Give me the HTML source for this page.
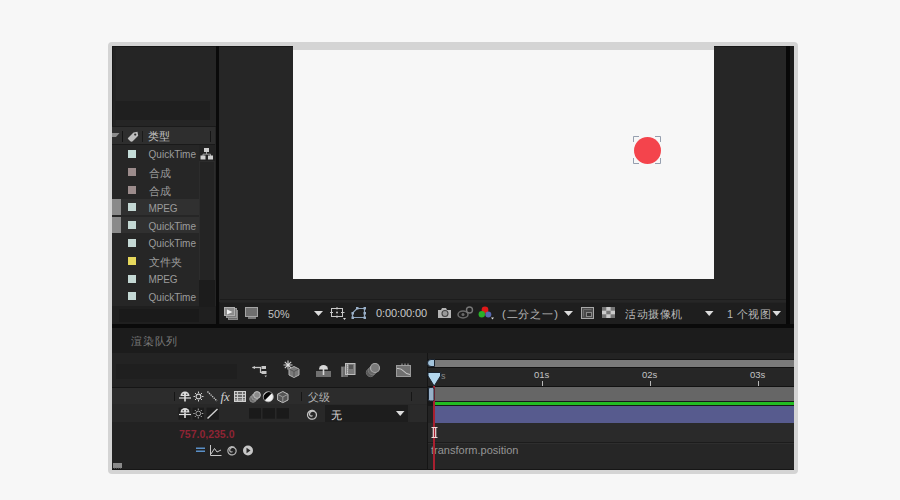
<!DOCTYPE html>
<html><head><meta charset="utf-8">
<style>
html,body{margin:0;padding:0;}
body{width:900px;height:500px;background:#f7f7f7;position:relative;overflow:hidden;font-family:"Liberation Sans",sans-serif;}
.a{position:absolute;}
.t{position:absolute;white-space:nowrap;font-size:11px;line-height:12px;color:#a8a8a8;}
</style></head><body>
<!-- frame -->
<div class="a" style="left:108px;top:42px;width:690px;height:432px;background:#d4d4d4;border-radius:4px;"></div>
<div class="a" style="left:112px;top:46px;width:682px;height:424px;background:#1a1a1a;"></div>

<!-- LEFT PROJECT PANEL -->
<div class="a" style="left:112px;top:46px;width:104px;height:278px;background:#252525;"></div>
<div class="a" style="left:112px;top:46px;width:104px;height:1px;background:#161616;"></div>
<div class="a" style="left:112px;top:46px;width:1px;height:80px;background:#181818;"></div>
<div class="a" style="left:113px;top:47px;width:3px;height:79px;background:#222;"></div>
<div class="a" style="left:115px;top:101px;width:95px;height:19px;background:#1f1f1f;"></div>
<div class="a" style="left:112px;top:126px;width:104px;height:1px;background:#1a1a1a;"></div>
<div class="a" style="left:112px;top:127px;width:103px;height:17px;background:#2e2e2e;"></div>
<div class="a" style="left:112px;top:144px;width:103px;height:1px;background:#1a1a1a;"></div>
<div class="a" style="left:112px;top:145px;width:87px;height:161px;background:#262626;"></div>
<div class="a" style="left:199px;top:145px;width:16px;height:161px;background:#232323;"></div>
<div class="a" style="left:112px;top:306px;width:104px;height:18px;background:#1f1f1f;"></div>

<!-- header content -->
<svg class="a" style="left:112px;top:131px;" width="100" height="13" viewBox="0 0 100 13">
  <path d="M0 2 L7.5 2 L4 6 L0 6 Z" fill="#8c8c8c"/>
  <rect x="10" y="0" width="1" height="11" fill="#151515"/>
  <path d="M16.5 6.5 L21.5 1.5 L25.5 0.8 L26.2 4.8 L21.2 9.8 Q19.5 11.5 17.8 9.8 L16.5 8.5 Q15 7 16.5 6.5 Z" fill="#bdbdbd"/>
  <circle cx="23.2" cy="3.6" r="1.1" fill="#2e2e2e"/>
  <rect x="30" y="0" width="1" height="11" fill="#1a1a1a"/>
  <rect x="98" y="0" width="1" height="11" fill="#151515"/>
</svg>
<div class="t" style="left:148px;top:130px;font-size:11px;color:#c4c4c4;">类型</div>
<!-- scrollbar column -->
<div class="a" style="left:199px;top:161px;width:14px;height:118px;background:#242424;border:1px solid #2c2c2c;border-bottom:none;"></div>
<div class="a" style="left:199px;top:280px;width:16px;height:27px;background:#1c1c1c;"></div>
<svg class="a" style="left:200px;top:147px;" width="14" height="13" viewBox="0 0 14 13">
  <rect x="4" y="1" width="5" height="4" fill="#cfcfcf"/>
  <path d="M6.5 5 V7 M3 9 V7.2 H10.5 V9" stroke="#a0a0a0" stroke-width="1" fill="none"/>
  <rect x="0.5" y="8.5" width="5" height="4" fill="#d0d0d0"/>
  <rect x="8" y="8.5" width="5" height="4" fill="#d0d0d0"/>
</svg>
<!-- footer -->
<div class="a" style="left:119px;top:309px;width:80px;height:13px;background:#1a1a1a;"></div>

<!-- LIST ROWS -->
<div class="a" style="left:128px;top:150.0px;width:8px;height:8px;background:#c4dcd8;"></div>
<div class="t" style="left:148.6px;top:149.3px;font-size:10px;color:#9c9c9c;">QuickTime</div>
<div class="a" style="left:128px;top:167.8px;width:8px;height:8px;background:#9c8c8c;"></div>
<div class="t" style="left:148.6px;top:166.8px;font-size:11px;color:#9c9c9c;">合成</div>
<div class="a" style="left:128px;top:185.6px;width:8px;height:8px;background:#9c8c8c;"></div>
<div class="t" style="left:148.6px;top:184.6px;font-size:11px;color:#9c9c9c;">合成</div>
<div class="a" style="left:121px;top:198.9px;width:78px;height:16px;background:#303030;"></div>
<div class="a" style="left:112px;top:198.9px;width:9px;height:16px;background:#8a8a8a;"></div>
<div class="a" style="left:128px;top:203.4px;width:8px;height:8px;background:#c4d8d4;"></div>
<div class="t" style="left:148.6px;top:202.7px;font-size:10px;color:#9c9c9c;letter-spacing:-0.2px;">MPEG</div>
<div class="a" style="left:121px;top:216.7px;width:78px;height:16px;background:#303030;"></div>
<div class="a" style="left:112px;top:216.7px;width:9px;height:16px;background:#8a8a8a;"></div>
<div class="a" style="left:128px;top:221.2px;width:8px;height:8px;background:#c4d8d4;"></div>
<div class="t" style="left:148.6px;top:220.5px;font-size:10px;color:#9c9c9c;">QuickTime</div>
<div class="a" style="left:128px;top:239.0px;width:8px;height:8px;background:#c4d8d4;"></div>
<div class="t" style="left:148.6px;top:238.3px;font-size:10px;color:#9c9c9c;">QuickTime</div>
<div class="a" style="left:128px;top:256.8px;width:8px;height:8px;background:#e6d85c;"></div>
<div class="t" style="left:148.6px;top:255.8px;font-size:11px;color:#9c9c9c;">文件夹</div>
<div class="a" style="left:128px;top:274.6px;width:8px;height:8px;background:#c4d8d4;"></div>
<div class="t" style="left:148.6px;top:273.9px;font-size:10px;color:#9c9c9c;letter-spacing:-0.2px;">MPEG</div>
<div class="a" style="left:128px;top:292.4px;width:8px;height:8px;background:#c4d8d4;"></div>
<div class="t" style="left:148.6px;top:291.7px;font-size:10px;color:#9c9c9c;">QuickTime</div>

<!-- BLACK DIVIDER -->
<div class="a" style="left:216px;top:46px;width:3px;height:278px;background:#0a0a0a;"></div>

<!-- VIEWER -->
<div class="a" style="left:219px;top:46px;width:567px;height:256px;background:#262626;"></div>
<div class="a" style="left:219px;top:46px;width:567px;height:1px;background:#181818;"></div>
<div class="a" style="left:293px;top:46px;width:421px;height:4px;background:#d4d4d4;"></div>
<div class="a" style="left:293px;top:50px;width:421px;height:229px;background:#f7f7f7;"></div>
<div class="a" style="left:634px;top:137px;width:27px;height:27px;border-radius:50%;background:#f4444c;"></div>
<svg class="a" style="left:630px;top:133px;" width="35" height="35" viewBox="630 133 35 35">
  <path d="M633.5 142 V136.5 H639 M655 136.5 H660.5 V142 M660.5 158 V163.5 H655 M639 163.5 H633.5 V158" fill="none" stroke="#8a94a6" stroke-width="0.9"/>
</svg>
<!-- toolbar -->
<div class="a" style="left:220px;top:299px;width:566px;height:1px;background:#1c1c1c;"></div>
<div class="a" style="left:220px;top:302px;width:566px;height:22px;background:#1e1e1e;"></div>
<div class="a" style="left:220px;top:302px;width:566px;height:1px;background:#232323;"></div>
<svg class="a" style="left:220px;top:302px;" width="566" height="22" viewBox="220 302 566 22">
  <!-- preview stack -->
  <rect x="228.5" y="310.5" width="9" height="9" fill="#6c6c6c" stroke="#8a8a8a"/>
  <rect x="226.5" y="308.5" width="10" height="9" fill="#7a7a7a" stroke="#999"/>
  <rect x="224.5" y="307.5" width="10" height="8" fill="#8c8c8c" stroke="#b0b0b0"/>
  <path d="M227 309.5 L232.5 312 L227 314.5 Z" fill="#f0f0f0"/>
  <!-- monitor -->
  <rect x="245.5" y="307.5" width="12" height="9" fill="#6e6e6e" stroke="#a4a4a4"/>
  <rect x="248" y="317" width="8" height="2" fill="#7a7a7a"/>
  <!-- triangle -->
  <path d="M314 311 L323 311 L318.5 316 Z" fill="#dcdcdc"/>
  <!-- grid icon -->
  <rect x="331.5" y="308.5" width="11" height="8" fill="none" stroke="#c8c8c8"/>
  <path d="M330 312.5 H333 M341 312.5 H344.5 M337 307 V309.5 M337 315.5 V318" stroke="#c8c8c8"/>
  <circle cx="337" cy="312.5" r="1" fill="#c8c8c8"/>
  <path d="M343 318 L346 318 L344.5 320 Z" fill="#d8d8d8"/>
  <!-- mask icon -->
  <path d="M357 308.5 H364.5 V317.5 H352.5 V313 Z" fill="none" stroke="#8ea4bc" stroke-width="1.2"/>
  <rect x="356" y="307" width="2.5" height="2.5" fill="#9ab0c8"/>
  <rect x="363.5" y="307" width="2.5" height="2.5" fill="#9ab0c8"/>
  <rect x="363.5" y="316.5" width="2.5" height="2.5" fill="#9ab0c8"/>
  <rect x="351.5" y="316.5" width="2.5" height="2.5" fill="#9ab0c8"/>
  <rect x="351.5" y="312" width="2.5" height="2.5" fill="#9ab0c8"/>
  <rect x="363.5" y="312" width="2.5" height="2.5" fill="#9ab0c8"/>
  <!-- camera -->
  <path d="M438 310 H441 L442 308 H446 L447 310 H451 V318 H438 Z" fill="#b4b4b4"/>
  <circle cx="445" cy="313.5" r="3" fill="#999" stroke="#444" stroke-width="1.1"/>
  <!-- eye 3d -->
  <ellipse cx="463" cy="314.5" rx="5" ry="3.5" fill="none" stroke="#6a6a6a" stroke-width="1.5"/>
  <circle cx="463" cy="314.5" r="1.5" fill="#6a6a6a"/>
  <circle cx="469.5" cy="310" r="3" fill="none" stroke="#777" stroke-width="1.4"/>
  <!-- rgb -->
  <circle cx="485" cy="310" r="3.4" fill="#e01818"/>
  <circle cx="481.8" cy="314.2" r="3.2" fill="#28b028"/>
  <circle cx="488.3" cy="314.5" r="3" fill="#5868b0"/>
  <path d="M491 317.5 L494 317.5 L492.5 319.5 Z" fill="#e0e0e0"/>
  <!-- triangle 2 -->
  <path d="M564 311 L573 311 L568.5 316 Z" fill="#dcdcdc"/>
  <!-- region icon -->
  <rect x="581.5" y="307.5" width="12" height="11" fill="#4a4a4a" stroke="#a8a8a8"/>
  <path d="M583.5 316.5 V309.5 H591.5" fill="none" stroke="#6a6a6a"/>
  <rect x="586.5" y="312.5" width="5" height="4" fill="#333" stroke="#8a8a8a"/>
  <!-- checker -->
  <rect x="602" y="307" width="13" height="11" fill="#cacaca"/>
  <rect x="602" y="307" width="4.3" height="3.7" fill="#777"/>
  <rect x="610.6" y="307" width="4.4" height="3.7" fill="#777"/>
  <rect x="606.3" y="310.7" width="4.3" height="3.6" fill="#777"/>
  <rect x="602" y="314.3" width="4.3" height="3.7" fill="#777"/>
  <rect x="610.6" y="314.3" width="4.4" height="3.7" fill="#777"/>
  <!-- triangles 3,4 -->
  <path d="M705 311 L713.5 311 L709.2 316 Z" fill="#dcdcdc"/>
  <path d="M772.5 311 L781 311 L776.7 316 Z" fill="#dcdcdc"/>
</svg>
<div class="t" style="left:268px;top:307.5px;font-size:10.8px;color:#c4c4c4;">50%</div>
<div class="t" style="left:376px;top:307px;font-size:11px;color:#c8c8c8;letter-spacing:-0.1px;">0:00:00:00</div>
<div class="t" style="left:502px;top:308px;font-size:11px;color:#b8b8b8;letter-spacing:0.9px;">(二分之一)</div>
<div class="t" style="left:625px;top:308px;font-size:11px;color:#b8b8b8;letter-spacing:0.5px;">活动摄像机</div>
<div class="t" style="left:727px;top:308px;font-size:11px;color:#b8b8b8;letter-spacing:0.35px;">1 个视图</div>
<div class="a" style="left:786px;top:46px;width:4px;height:278px;background:#080808;"></div>
<div class="a" style="left:790px;top:46px;width:4px;height:278px;background:#1c1c1c;"></div>

<!-- black horizontal bar -->
<div class="a" style="left:112px;top:324px;width:682px;height:4px;background:#0a0a0a;"></div>
<!-- tab bar -->
<div class="a" style="left:112px;top:328px;width:682px;height:25px;background:#1c1c1c;"></div>


<!-- TIMELINE LEFT -->
<div class="a" style="left:112px;top:353px;width:315px;height:34px;background:#232323;"></div>
<div class="a" style="left:116px;top:364px;width:121px;height:15px;background:#1f1f1f;"></div>
<div class="a" style="left:112px;top:387px;width:315px;height:1px;background:#151515;"></div>
<div class="a" style="left:112px;top:388px;width:315px;height:16px;background:#2c2c2c;"></div>
<div class="a" style="left:112px;top:404px;width:315px;height:18px;background:#282828;"></div>
<div class="a" style="left:112px;top:422px;width:315px;height:20px;background:#222222;"></div>
<div class="a" style="left:112px;top:442px;width:315px;height:28px;background:#222222;"></div>

<!-- timeline left icons -->
<svg class="a" style="left:112px;top:353px;" width="315" height="117" viewBox="112 353 315 117">
  <!-- flowchart -->
  <path d="M252.5 367.5 H261" stroke="#c8c8c8" stroke-width="1.3"/>
  <path d="M252 367.5 L255 366 V369 Z" fill="#c8c8c8"/>
  <rect x="261.5" y="366" width="4.5" height="3" fill="#c8c8c8"/>
  <path d="M260.5 367.5 V372.5 H262" stroke="#c8c8c8" stroke-width="1.2" fill="none"/>
  <rect x="261.5" y="371" width="5" height="3" fill="#c8c8c8"/>
  <path d="M264.5 375.5 H267 L265.7 377.2 Z" fill="#bbb"/>
  <!-- sparkle cube -->
  <path d="M288 360.5 V369.5 M283.5 365 H292.5 M284.8 361.8 L291.2 368.2 M291.2 361.8 L284.8 368.2" stroke="#d4d4d4" stroke-width="1.1"/><circle cx="288" cy="365" r="1.1" fill="#e0e0e0"/>
  <path d="M294 366.5 L299 369 V375 L294 377.5 L289 375 V369 Z" fill="#7a7a7a" stroke="#b4b4b4" stroke-width="1"/>
  <path d="M289.5 369.2 L294 371.5 L298.5 369.2 M294 371.5 V377" stroke="#555" stroke-width="1" fill="none"/>
  <!-- shy dome -->
  <path d="M319 369.5 A4.5 4.5 0 0 1 328 369.5 Z" fill="#d8d8d8"/>
  <rect x="316" y="371" width="15" height="6" fill="#707070"/>
  <path d="M323.5 369 V375" stroke="#d8d8d8" stroke-width="1.6"/>
  <!-- frame blend -->
  <rect x="341" y="366.5" width="7" height="10.5" fill="#6a6a6a"/>
  <path d="M342.3 367.5 V376.5" stroke="#aaa" stroke-width="1" stroke-dasharray="1 1"/>
  <rect x="345.5" y="363.5" width="9.5" height="11" fill="#7a7a7a" stroke="#bdbdbd" stroke-width="1"/>
  <path d="M347.5 364.5 V374" stroke="#e0e0e0" stroke-width="1.2" stroke-dasharray="1.2 0.8"/>
  <rect x="349" y="365" width="4" height="4" fill="#555"/>
  <!-- motion blur -->
  <circle cx="370.5" cy="372.5" r="4.2" fill="#5a5a5a" stroke="#6a6a6a"/>
  <circle cx="372.5" cy="370.5" r="4.2" fill="#666" stroke="#7a7a7a"/>
  <circle cx="375" cy="368" r="4.5" fill="#7a7a7a" stroke="#a8a8a8" stroke-width="1.2"/>
  <!-- graph editor -->
  <rect x="396.5" y="365.5" width="14" height="11" fill="#707070" stroke="#9a9a9a"/>
  <path d="M402 363.5 V365.5 M405 363.5 V365.5 M408 363.5 V365.5" stroke="#aaa"/>
  <path d="M397 368.5 Q401 368 403.5 371 T410 374.5" stroke="#c8c8c8" stroke-width="1.1" fill="none"/>

  <!-- header separators -->
  <rect x="174" y="392" width="1" height="9" fill="#161616"/>
  <rect x="301" y="392" width="1" height="9" fill="#161616"/>
  <rect x="411" y="392" width="1" height="9" fill="#161616"/>
  <!-- shy header -->
  <path d="M180.5 396 A4.5 4.5 0 0 1 189.5 396 Z" fill="#dcdcdc"/><circle cx="183.3" cy="394.2" r="0.8" fill="#444"/><circle cx="186.7" cy="394.2" r="0.8" fill="#444"/>
  <path d="M179 398 H191" stroke="#dcdcdc" stroke-width="1.2"/>
  <path d="M185 396 V401.5" stroke="#dcdcdc" stroke-width="1.6"/>
  <!-- sun -->
  <circle cx="198.5" cy="396.5" r="2.4" fill="none" stroke="#d0d0d0" stroke-width="1.1"/>
  <path d="M198.5 391.5 V393 M198.5 400 V401.5 M193.5 396.5 H195 M202 396.5 H203.5 M195 393 L196 394 M201 399 L202 400 M202 393 L201 394 M196 399 L195 400" stroke="#d0d0d0" stroke-width="1"/>
  <!-- dotted backslash -->
  <path d="M207.5 391.5 L217 401" stroke="#d0d0d0" stroke-width="1.3" stroke-dasharray="1.3 0.9"/>
  <!-- film -->
  <rect x="234.5" y="391.5" width="11" height="10" fill="#6a6a6a" stroke="#d0d0d0"/>
  <path d="M234.5 394.5 H245.5 M234.5 397.5 H245.5 M234.5 400 H245.5 M237.5 391.5 V401.5 M242.5 391.5 V401.5" stroke="#d0d0d0" stroke-width="0.9"/>
  <!-- motion blur small -->
  <circle cx="253" cy="399" r="3.3" fill="#6a6a6a" stroke="#8a8a8a"/>
  <circle cx="255" cy="397" r="3.3" fill="#777" stroke="#999"/>
  <circle cx="257" cy="395" r="3.4" fill="#8a8a8a" stroke="#c0c0c0"/>
  <!-- adjustment -->
  <circle cx="268.3" cy="396.8" r="5" fill="#f0f0f0" stroke="#b8b8b8" stroke-width="0.8"/>
  <path d="M264.8 400.3 A5 5 0 0 1 271.8 393.3 Z" fill="#050505"/>
  <!-- cube -->
  <path d="M282.8 391.5 L288 394.2 V400 L282.8 402.7 L277.6 400 V394.2 Z" fill="#555" stroke="#c0c0c0" stroke-width="1"/>
  <path d="M277.8 394.4 L282.8 397 L287.8 394.4 M282.8 397 V402.5" stroke="#9a9a9a" stroke-width="1" fill="none"/>

  <!-- row 2 cells -->
  <rect x="178.5" y="407.7" width="12" height="12" fill="#1c1c1c"/>
  <rect x="192.5" y="407.7" width="11.5" height="12" fill="#1c1c1c"/>
  <rect x="206.5" y="407.7" width="12.3" height="12" fill="#1c1c1c"/>
  <path d="M180.5 412.5 A4.5 4.5 0 0 1 189.5 412.5 Z" fill="#dcdcdc"/><circle cx="183.3" cy="410.7" r="0.8" fill="#444"/><circle cx="186.7" cy="410.7" r="0.8" fill="#444"/>
  <path d="M179 414.5 H191" stroke="#dcdcdc" stroke-width="1.2"/>
  <path d="M185 412.5 V418" stroke="#dcdcdc" stroke-width="1.6"/>
  <circle cx="198.3" cy="413.5" r="2.4" fill="none" stroke="#a8a8a8" stroke-width="1"/>
  <path d="M198.3 408.5 V410 M198.3 417 V418.5 M193.3 413.5 H194.8 M201.8 413.5 H203.3 M194.8 410 L195.8 411 M200.8 416 L201.8 417 M201.8 410 L200.8 411 M195.8 416 L194.8 417" stroke="#a8a8a8" stroke-width="1"/>
  <path d="M207.5 418.5 L217.5 409" stroke="#d0d0d0" stroke-width="1.4"/>
  <rect x="249" y="408.2" width="12" height="10.5" fill="#1a1a1a"/>
  <rect x="262.5" y="408.2" width="12.5" height="10.5" fill="#1a1a1a"/>
  <rect x="276.5" y="408.2" width="12.5" height="10.5" fill="#1a1a1a"/>
  <!-- spiral -->
  <path d="M312.32 415.31 L312.29 415.44 L312.23 415.58 L312.14 415.71 L312.02 415.82 L311.88 415.92 L311.70 416.00 L311.51 416.05 L311.30 416.06 L311.07 416.04 L310.84 415.98 L310.61 415.88 L310.39 415.74 L310.18 415.56 L309.99 415.33 L309.83 415.08 L309.71 414.78 L309.63 414.46 L309.59 414.12 L309.61 413.77 L309.68 413.40 L309.80 413.04 L309.98 412.69 L310.22 412.35 L310.51 412.04 L310.85 411.77 L311.24 411.54 L311.67 411.37 L312.14 411.25 L312.63 411.19 L313.13 411.21 L313.65 411.29 L314.15 411.46 L314.65 411.69 L315.12 412.00 L315.55 412.38 L315.93 412.83 L316.16 413.37 L316.31 413.94 L316.39 414.52 L316.39 415.11 L316.31 415.69 L316.15 416.25 L315.92 416.79 L315.62 417.30 L315.26 417.76 L314.83 418.17 L314.36 418.51 L313.85 418.79 L313.30 419.00 L312.73 419.14 L312.14 419.20 L311.56 419.18 L310.98 419.08 L310.42 418.90 L309.88 418.66 L309.39 418.34 L308.94 417.96 L308.55 417.53 L308.21 417.04 L307.95 416.52 L307.76 415.96 L307.64 415.39 L307.60 414.80 L307.64 414.22 L307.75 413.64 L307.95 413.09 L308.21 412.56 L308.54 412.08 L308.94 411.64 L309.38 411.26 L309.88 410.95 L310.41 410.70 L310.97 410.52 L311.55 410.42 L312.13 410.40 L312.72 410.46 L313.29 410.59 L313.84 410.80 L314.35 411.08 L314.83 411.43" stroke="#c4c4c4" stroke-width="1.3" fill="none"/>
  <!-- dropdown -->
  <rect x="325" y="405" width="83" height="17" fill="#1d1d1d"/>
  <path d="M396 411 L404.5 411 L400.2 416 Z" fill="#dcdcdc"/>
  <rect x="410" y="405" width="17" height="17" fill="#2a2a2a"/>

  <!-- row 4 icons -->
  <path d="M196 448.2 H205 M196 451.2 H205" stroke="#5a90c8" stroke-width="1.6"/>
  <path d="M210.5 445 V455.5 H221.5" stroke="#c8c8c8" stroke-width="1" fill="none"/>
  <path d="M211 454 L214.5 448.5 L217 452 L221 450" stroke="#c8c8c8" stroke-width="1" fill="none"/>
  <path d="M232.32 451.31 L232.29 451.44 L232.23 451.56 L232.14 451.68 L232.02 451.79 L231.88 451.88 L231.72 451.95 L231.53 451.99 L231.33 452.00 L231.12 451.98 L230.90 451.92 L230.68 451.82 L230.47 451.69 L230.28 451.51 L230.10 451.30 L229.96 451.06 L229.84 450.78 L229.77 450.48 L229.74 450.16 L229.75 449.83 L229.82 449.49 L229.94 449.15 L230.11 448.82 L230.33 448.51 L230.60 448.22 L230.93 447.97 L231.29 447.75 L231.69 447.59 L232.13 447.48 L232.58 447.43 L233.06 447.45 L233.54 447.53 L234.01 447.68 L234.47 447.90 L234.91 448.19 L235.31 448.55 L235.67 448.96 L235.88 449.47 L236.02 450.00 L236.09 450.54 L236.09 451.09 L236.02 451.63 L235.87 452.16 L235.65 452.66 L235.37 453.13 L235.03 453.56 L234.64 453.94 L234.20 454.26 L233.72 454.52 L233.21 454.72 L232.68 454.84 L232.13 454.90 L231.59 454.88 L231.05 454.79 L230.52 454.63 L230.03 454.39 L229.57 454.10 L229.15 453.75 L228.78 453.34 L228.47 452.89 L228.23 452.40 L228.05 451.89 L227.94 451.35 L227.90 450.80 L227.94 450.26 L228.04 449.72 L228.22 449.20 L228.47 448.72 L228.78 448.26 L229.14 447.86 L229.56 447.50 L230.02 447.21 L230.52 446.98 L231.04 446.81 L231.58 446.72 L232.13 446.70 L232.67 446.76 L233.20 446.88 L233.71 447.08 L234.19 447.34 L234.64 447.66" stroke="#b8b8b8" stroke-width="1.2" fill="none"/>
  <circle cx="248" cy="450.5" r="5" fill="#c8c8c8"/>
  <path d="M246.5 447.8 L250.5 450.5 L246.5 453.2 Z" fill="#2a2a2a"/>
  <!-- bottom-left tiny icon -->
  <rect x="113" y="463" width="9" height="5" fill="#8a8a8a"/>
  <path d="M114 468 H121" stroke="#777" stroke-dasharray="1 1"/>
</svg>
<div class="t" style="left:131px;top:335px;font-size:11px;color:#7a7a7a;letter-spacing:0.8px;">渲染队列</div>
<div class="t" style="left:220.5px;top:390px;font-family:'Liberation Serif',serif;font-style:italic;font-size:13px;line-height:13px;color:#d0d0d0;">fx</div>
<div class="t" style="left:308px;top:390.5px;font-size:11px;color:#b0b0b0;">父级</div>
<div class="t" style="left:331px;top:409px;font-size:11px;color:#d8d8d8;">无</div>
<div class="t" style="left:179px;top:427.5px;font-size:10.5px;color:#8e2434;font-weight:bold;letter-spacing:0px;">757.0,235.0</div>

<!-- TIMELINE RIGHT -->
<div class="a" style="left:427px;top:353px;width:367px;height:117px;background:#232323;"></div>
<div class="a" style="left:427px;top:353px;width:1px;height:117px;background:#151515;"></div>
<div class="a" style="left:428px;top:359px;width:366px;height:1px;background:#141414;"></div>
<div class="a" style="left:434px;top:360px;width:360px;height:7px;background:#7a7a7a;"></div>
<div class="a" style="left:428px;top:367px;width:366px;height:1px;background:#121212;"></div>
<div class="a" style="left:428px;top:368px;width:366px;height:18px;background:#262626;"></div>
<div class="a" style="left:428px;top:386px;width:366px;height:1px;background:#121212;"></div>
<div class="a" style="left:434px;top:387px;width:360px;height:14px;background:#666666;"></div>
<div class="a" style="left:428px;top:401px;width:366px;height:5px;background:#181818;"></div>
<div class="a" style="left:435px;top:402px;width:359px;height:3px;background:#22bc22;"></div>
<div class="a" style="left:435px;top:406px;width:359px;height:16.5px;background:#575b8e;"></div>
<div class="a" style="left:428px;top:422.5px;width:366px;height:19.5px;background:#2a2a2a;"></div>
<div class="a" style="left:428px;top:442px;width:366px;height:1px;background:#1c1c1c;"></div>
<div class="a" style="left:428px;top:443px;width:366px;height:27px;background:#262626;"></div>
<div class="a" style="left:428px;top:443px;width:366px;height:1px;background:#2e2e2e;"></div>
<div class="a" style="left:112px;top:469px;width:682px;height:1px;background:#161616;"></div>
<div class="t" style="left:534.0px;top:369px;font-size:9.5px;color:#c4c4c4;">01s</div>
<div class="t" style="left:642.0px;top:369px;font-size:9.5px;color:#c4c4c4;">02s</div>
<div class="t" style="left:750.0px;top:369px;font-size:9.5px;color:#c4c4c4;">03s</div>
<div class="t" style="left:441px;top:370px;font-size:9px;color:#888;">s</div>
<div class="a" style="left:542px;top:381px;width:1px;height:5px;background:#b8b8b8;"></div>
<div class="a" style="left:650px;top:381px;width:1px;height:5px;background:#b8b8b8;"></div>
<div class="a" style="left:758px;top:381px;width:1px;height:5px;background:#b8b8b8;"></div>
<div class="t" style="left:431px;top:444px;color:#959595;font-size:11px;">transform.position</div>
<div class="a" style="left:433px;top:386px;width:2px;height:84px;background:#a82030;"></div>
<div class="a" style="left:433.5px;top:360px;width:1px;height:7px;background:#9a3a40;"></div>
<svg class="a" style="left:422px;top:354px;" width="25" height="90" viewBox="422 354 25 90">
  <path d="M434.5 359.5 H431 Q427.5 359.5 427.5 363 Q427.5 366.5 431 366.5 H434.5 Z" fill="#a4c4dc" stroke="#1a2430" stroke-width="1"/>
  <path d="M428 372.5 H440.5 V376 L434.2 386 L428 376 Z" fill="#b4d8ee" stroke="#1a2430" stroke-width="1"/>
  <rect x="428.5" y="387.5" width="5.5" height="13.5" rx="1.5" fill="#98b0c8" stroke="#1a2430" stroke-width="1"/>
  <path d="M431.5 427.5 H437.5 M431.5 437.5 H437.5 M433.3 427.5 V437.5 M435.7 427.5 V437.5" stroke="#f0d8d8" stroke-width="1.2"/>
</svg>
</body></html>
